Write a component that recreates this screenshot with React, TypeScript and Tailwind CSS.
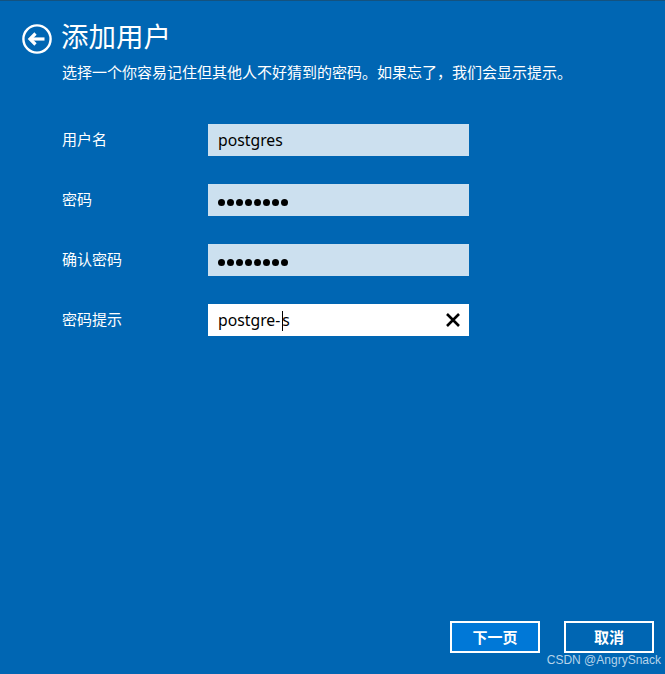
const cjk = "font-['Segoe_UI','Noto_Sans','Noto_Sans_CJK_SC',sans-serif]"

const rows = [
  { label: '用户名', kind: 'text', value: 'postgres' },
  { label: '密码', kind: 'dots' },
  { label: '确认密码', kind: 'dots' },
  { label: '密码提示', kind: 'focus' },
]

function BackIcon() {
  return (
    <svg width="30" height="30" viewBox="0 0 30 30" fill="none" className="shrink-0">
      <circle cx="15" cy="15" r="13.6" stroke="white" strokeWidth="2.4" />
      <path d="M22.5 15H9.5" stroke="white" strokeWidth="3.2" />
      <path d="M13.5 9.5L8 15L13.5 20.5" stroke="white" strokeWidth="3.2" />
    </svg>
  )
}

function Dots() {
  return (
    <div className="flex gap-[2px] pt-[4px]">
      {[0, 1, 2, 3, 4, 5, 6, 7].map((i) => (
        <span key={i} className="w-[7px] h-[7px] rounded-full bg-black" />
      ))}
    </div>
  )
}

export default function App() {
  return (
    <div className={`relative flex flex-col w-[665px] h-[674px] bg-[#0066b3] border-t border-[#14527f] text-white ${cjk}`}>
      <div className="flex items-center gap-[9px] pl-[22px] pt-[19px] h-[56px]">
        <BackIcon />
        <h1 className="text-[27.5px] leading-[34px] font-normal -mt-[4px]">添加用户</h1>
      </div>
      <p className="pl-[62px] pt-[5px] text-[15px] leading-[20px]">
        {'选择一个你容易记住但其他人不好猜到的密码。如果忘了\uFF0C我们会显示提示。'}
      </p>

      <div className="flex flex-col gap-[28px] pl-[62px] mt-[42px]">
        {rows.map((row) => (
          <div key={row.label} className="flex items-center h-[32px]">
            <span className="w-[146px] text-[15px] leading-[20px] -mt-[3px]">{row.label}</span>
            <div
              className={`flex items-center w-[261px] h-[32px] pl-[10px] pr-[8px] text-black text-[15.75px] ${
                row.kind === 'focus' ? 'bg-white' : 'bg-[#cce0ef]'
              }`}
            >
              {row.kind === 'text' && <span className="pt-[1px]">{row.value}</span>}
              {row.kind === 'dots' && <Dots />}
              {row.kind === 'focus' && (
                <>
                  <span className="flex-1 pt-[1px]">
                    postgre-
                    <span className="inline-block w-px h-[20px] ml-[2px] -mr-px bg-black align-middle" />
                    s
                  </span>
                  <svg width="16" height="16" viewBox="0 0 16 16" fill="none">
                    <path d="M2 2L14 14M14 2L2 14" stroke="black" strokeWidth="2.6" />
                  </svg>
                </>
              )}
            </div>
          </div>
        ))}
      </div>

      <div className="mt-auto flex justify-end gap-[24px] pr-[11px] pb-[21px]">
        <button className="w-[90px] h-[32px] border-2 border-white bg-[#0078d7] text-[15px] font-bold">下一页</button>
        <button className="w-[90px] h-[32px] border-2 border-white text-[15px] font-bold">取消</button>
      </div>

      <span className="absolute right-[4px] bottom-[7px] text-[12px] leading-[14px] text-[#b5d3ea] font-['Liberation_Sans',sans-serif]">
        CSDN @AngrySnack
      </span>
    </div>
  )
}
